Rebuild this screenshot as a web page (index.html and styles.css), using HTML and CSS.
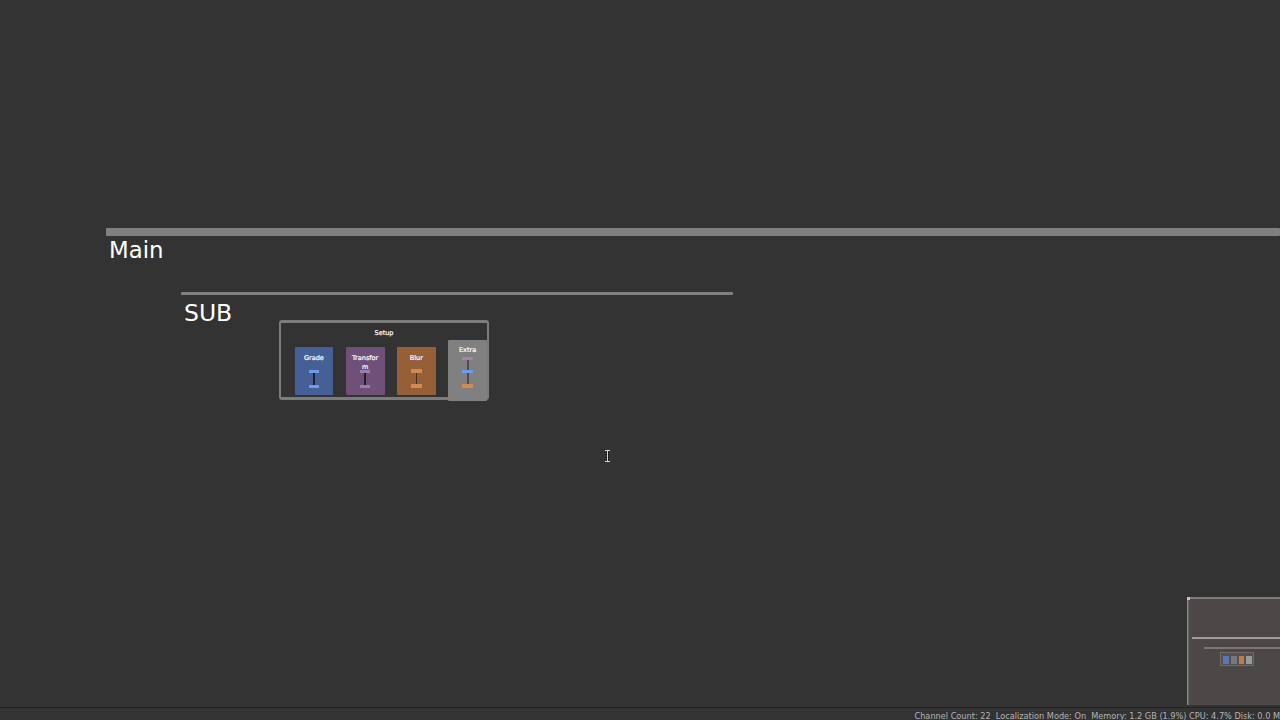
FILE: index.html
```html
<!DOCTYPE html>
<html>
  <head>
    <meta charset="UTF-8" />
    <title>Mixer</title>
    <link rel="stylesheet" href="styles.css">
  </head>
  <body>
    <div class="canvas">
      <div class="section main-section">
        <div class="bar main-bar"></div>
        <p class="section-name main-name">Main</p>
      </div>
      <div class="section sub-section">
        <div class="bar sub-bar"></div>
        <p class="section-name sub-name">SUB</p>
      </div>

      <div class="group">
        <p class="group-title">Setup</p>
        <div class="strips">
          <div class="strip grade">
            <p class="strip-name">Grade</p>
            <div class="fader">
              <span class="thumb top-thumb"></span>
              <span class="thumb low-thumb"></span>
            </div>
          </div>
          <div class="strip transform">
            <p class="strip-name">Transform</p>
            <div class="fader">
              <span class="thumb top-thumb"></span>
              <span class="thumb low-thumb"></span>
            </div>
          </div>
          <div class="strip blur">
            <p class="strip-name">Blur</p>
            <div class="fader">
              <span class="thumb top-thumb"></span>
              <span class="thumb low-thumb"></span>
            </div>
          </div>
          <div class="strip extra">
            <p class="strip-name">Extra</p>
            <div class="fader">
              <span class="thumb purple-thumb"></span>
              <span class="thumb blue-thumb"></span>
              <span class="thumb orange-thumb"></span>
            </div>
          </div>
        </div>
      </div>

      <svg class="text-cursor" width="7" height="12" viewBox="0 0 7 12">
        <path d="M1 .5h5M1 11.5h5M3.5 1v10" stroke="#d8d8d8" stroke-width="1" fill="none" />
        <path d="M2.5 1v10M4.5 1v10" stroke="#111" stroke-width="1" opacity=".6" fill="none" />
      </svg>

      <div class="minimap">
        <div class="mini-corner"></div>
        <div class="mini-main"></div>
        <div class="mini-sub"></div>
        <div class="mini-group">
          <span class="mini-strip mini-blue"></span>
          <span class="mini-strip mini-purple"></span>
          <span class="mini-strip mini-orange"></span>
          <span class="mini-strip mini-grey"></span>
        </div>
      </div>
    </div>

    <div class="status">
      <span class="status-text">Channel Count: 22&nbsp; Localization Mode: On&nbsp; Memory: 1.2 GB (1.9%) CPU: 4.7% Disk: 0.0 M</span>
    </div>
  </body>
</html>
```

FILE: styles.css
```css
html {
  height: 100%;
}
body {
  display: flex;
  flex-direction: column;
  height: 100%;
  margin: 0;
  overflow: hidden;
  font-family: "DejaVu Sans", sans-serif;
  background-color: #333333;
}
p {
  margin: 0;
  color: white;
}
.canvas {
  position: relative;
  flex: 1;
  overflow: hidden;
}

/* sections */
.section {
  position: absolute;
  right: 0;
}
.main-section {
  top: 228px;
  left: 106px;
}
.sub-section {
  top: 292px;
  left: 181px;
  width: 552px;
}
.bar {
  background-color: #808080;
  border-radius: 1px;
}
.main-bar {
  height: 8px;
}
.sub-bar {
  height: 3px;
}
.section-name {
  line-height: 27px;
}
.main-name {
  margin: 1px 0 0 3px;
  font-size: 22.8px;
}
.sub-name {
  margin: 5px 0 0 3px;
  font-size: 23.5px;
}

/* group with its strips */
.group {
  position: absolute;
  top: 320px;
  left: 279px;
  width: 206px;
  height: 74px;
  border: solid #7c7c7c;
  border-width: 3px 2px;
  border-radius: 3px;
}
.group-title {
  padding-top: 5px;
  font-size: 6.5px;
  line-height: 10px;
  text-align: center;
  color: white;
  -webkit-text-stroke: .2px;
}
.strips {
  display: flex;
  gap: 12.3px;
  margin-top: 9px;
  padding-left: 13.5px;
}
.strip {
  position: relative;
  display: flex;
  flex-direction: column;
  align-items: center;
  width: 39px;
  height: 48px;
  border-radius: 1px;
}
.strip-name {
  box-sizing: border-box;
  width: 100%;
  padding: 7px 5px 0;
  font-size: 6.5px;
  line-height: 9px;
  text-align: center;
  word-break: break-all;
  color: white;
  -webkit-text-stroke: .2px;
}
.grade {
  background-color: #465f96;
}
.transform {
  background-color: #6e5078;
}
.blur {
  background-color: #965f37;
}
.extra {
  height: 61px;
  margin-top: -7px;
  background-color: #808080;
}
.extra .strip-name {
  padding-top: 6px;
}
.fader {
  position: absolute;
  top: 24px;
  width: 1.5px;
  height: 15px;
  background-color: #1f1f1f;
}
.thumb {
  position: absolute;
  left: -4.5px;
  width: 10.5px;
  height: 3px;
}
.top-thumb {
  top: -1px;
}
.low-thumb {
  top: 14px;
}
.grade .thumb {
  background-color: #6f9bef;
}
.transform .thumb {
  background-color: #9c7ca8;
}
.blur .fader {
  background-color: #3d2f22;
}
.blur .thumb {
  top: -2px;
  height: 4px;
  background-color: #d28a50;
}
.blur .low-thumb {
  top: 13px;
}
.extra .fader {
  top: 17px;
  width: 2px;
  height: 31px;
  background-color: #4d4d4d;
}
.purple-thumb {
  top: 0;
  background-color: #a583b0;
}
.blue-thumb {
  top: 13px;
  background-color: #6f9bef;
}
.orange-thumb {
  top: 27px;
  height: 4px;
  background-color: #d28a50;
}

.text-cursor {
  position: absolute;
  top: 450px;
  left: 604px;
}

/* overview in the corner */
.minimap {
  position: absolute;
  top: 597px;
  left: 1187px;
  right: 0;
  bottom: 2px;
  background-color: #4d4848;
  border-top: 2px solid #7f7b7b;
  border-left: 1px solid #8a8686;
  box-shadow: inset 1px 0 #6a6666;
}
.mini-corner {
  position: absolute;
  top: -2px;
  left: -1px;
  width: 3px;
  height: 3px;
  background-color: #c4c4c4;
}
.mini-main {
  position: absolute;
  top: 38px;
  left: 4px;
  right: 0;
  height: 2px;
  background-color: #a09c9c;
}
.mini-sub {
  position: absolute;
  top: 48px;
  left: 16px;
  right: 0;
  height: 2px;
  background-color: #7a7676;
}
.mini-group {
  position: absolute;
  top: 53px;
  left: 32px;
  display: flex;
  gap: 2px;
  box-sizing: border-box;
  width: 34px;
  height: 14px;
  padding: 3px 1px 0 2px;
  background-color: #565151;
  border: 1px solid #6f6b6b;
}
.mini-strip {
  width: 6px;
  height: 8px;
}
.mini-blue {
  background-color: #5878b8;
}
.mini-purple {
  background-color: #7d777c;
}
.mini-orange {
  background-color: #c07a42;
}
.mini-grey {
  background-color: #9a9a9a;
}

.status {
  display: flex;
  flex: none;
  justify-content: flex-end;
  height: 12px;
  overflow: hidden;
  border-top: 1px solid #232323;
  background-color: #333333;
}
.status-text {
  flex: none;
  font-size: 8.18px;
  line-height: 17px;
  white-space: nowrap;
  color: #b4b4b4;
}
```
